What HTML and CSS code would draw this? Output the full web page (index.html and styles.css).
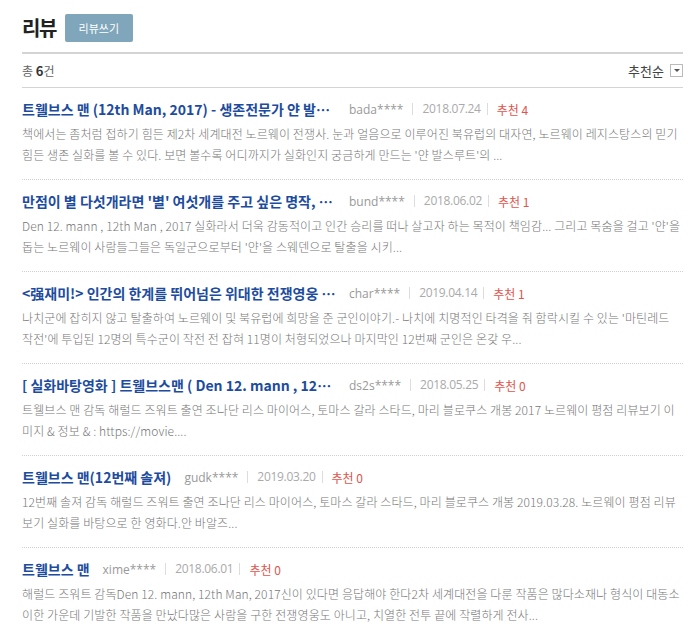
FILE: index.html
```html
<!DOCTYPE html>
<html>
<head>
    <meta charset="UTF-8">
    <title>리뷰</title>
    <link rel="stylesheet" href="styles.css">
</head>
<body>
    <div class="review-box">
        <div class="review-head">
            <h2>리뷰</h2>
            <a href="#" class="btn-write">리뷰쓰기</a>
        </div>

        <div class="review-bar">
            <span class="count">총 <b>6</b>건</span>
            <span class="sort">추천순 <i class="sort-arrow"></i></span>
        </div>

        <ul class="review-list">
            <li>
                <div class="item-top">
                    <a href="#" class="item-title">트웰브스 맨 (12th Man, 2017) - 생존전문가 얀 발스루드의 실화</a>
                    <span class="writer">bada****</span>
                    <span class="date">2018.07.24</span>
                    <span class="rec">추천 4</span>
                </div>
                <p class="item-desc">책에서는 좀처럼 접하기 힘든 제2차 세계대전 노르웨이 전쟁사. 눈과 얼음으로 이루어진 북유럽의 대자연, 노르웨이 레지스탕스의 믿기 힘든 생존 실화를 볼 수 있다. 보면 볼수록 어디까지가 실화인지 궁금하게 만드는 '얀 발스루트'의 ...</p>
            </li>
            <li>
                <div class="item-top">
                    <a href="#" class="item-title">만점이 별 다섯개라면 '별' 여섯개를 주고 싶은 명작, 트웰브스 맨</a>
                    <span class="writer">bund****</span>
                    <span class="date">2018.06.02</span>
                    <span class="rec">추천 1</span>
                </div>
                <p class="item-desc">Den 12. mann , 12th Man , 2017 실화라서 더욱 감동적이고 인간 승리를 떠나 살고자 하는 목적이 책임감... 그리고 목숨을 걸고 '얀'을 돕는 노르웨이 사람들그들은 독일군으로부터 '얀'을 스웨덴으로 탈출을 시키...</p>
            </li>
            <li>
                <div class="item-top">
                    <a href="#" class="item-title">&lt;强재미!&gt; 인간의 한계를 뛰어넘은 위대한 전쟁영웅 이야기</a>
                    <span class="writer">char****</span>
                    <span class="date">2019.04.14</span>
                    <span class="rec">추천 1</span>
                </div>
                <p class="item-desc">나치군에 잡히지 않고 탈출하여 노르웨이 및 북유럽에 희망을 준 군인이야기.- 나치에 치명적인 타격을 줘 함락시킬 수 있는 '마틴레드 작전'에 투입된 12명의 특수군이 작전 전 잡혀 11명이 처형되었으나 마지막인 12번째 군인은 온갖 우...</p>
            </li>
            <li>
                <div class="item-top">
                    <a href="#" class="item-title">[ 실화바탕영화 ] 트웰브스맨 ( Den 12. mann , 12th Man )</a>
                    <span class="writer">ds2s****</span>
                    <span class="date">2018.05.25</span>
                    <span class="rec">추천 0</span>
                </div>
                <p class="item-desc">트웰브스 맨 감독 해럴드 즈워트 출연 조나단 리스 마이어스, 토마스 갈라 스타드, 마리 블로쿠스 개봉 2017 노르웨이 평점 리뷰보기 이미지 &amp; 정보 &amp; : https://movie....</p>
            </li>
            <li>
                <div class="item-top">
                    <a href="#" class="item-title">트웰브스 맨(12번째 솔져)</a>
                    <span class="writer">gudk****</span>
                    <span class="date">2019.03.20</span>
                    <span class="rec">추천 0</span>
                </div>
                <p class="item-desc">12번째 솔져 감독 해럴드 즈워트 출연 조나단 리스 마이어스, 토마스 갈라 스타드, 마리 블로쿠스 개봉 2019.03.28. 노르웨이 평점 리뷰보기 실화를 바탕으로 한 영화다.안 바알즈...</p>
            </li>
            <li>
                <div class="item-top">
                    <a href="#" class="item-title">트웰브스 맨</a>
                    <span class="writer">xime****</span>
                    <span class="date">2018.06.01</span>
                    <span class="rec">추천 0</span>
                </div>
                <p class="item-desc">해럴드 즈워트 감독Den 12. mann, 12th Man, 2017신이 있다면 응답해야 한다2차 세계대전을 다룬 작품은 많다소재나 형식이 대동소이한 가운데 기발한 작품을 만났다많은 사람을 구한 전쟁영웅도 아니고, 치열한 전투 끝에 작렬하게 전사...</p>
            </li>
        </ul>
    </div>
</body>
</html>
```

FILE: styles.css
```css
body {
    margin: 0;
    background: #fff;
    font-family: "Noto Sans CJK KR", "Noto Sans", sans-serif;
    color: #333;
}
.review-box {
    width: 661px;
    margin-left: 22px;
}
.review-head {
    display: flex;
    align-items: center;
    gap: 9px;
    padding-top: 14px;
    padding-bottom: 10px;
    border-bottom: 2px solid #d4d4d4;
}
.review-head h2 {
    margin: 0;
    font-size: 20px;
    font-weight: bold;
    color: #222;
    letter-spacing: -1.5px;
    line-height: 28px;
}
.btn-write {
    display: block;
    width: 68px;
    height: 28px;
    line-height: 28px;
    text-align: center;
    background: #7fa6ba;
    border-radius: 2px;
    color: #fff;
    font-size: 11px;
    text-decoration: none;
}
.review-bar {
    display: flex;
    justify-content: space-between;
    align-items: center;
    height: 33px;
    border-bottom: 1px solid #d4d4d4;
    font-size: 12px;
    color: #666;
}
.count b {
    color: #333;
    font-size: 13px;
}
.sort {
    display: flex;
    align-items: center;
    gap: 6px;
    color: #444;
    font-size: 13px;
}
.sort-arrow {
    display: block;
    width: 11px;
    height: 11px;
    border: 1px solid #bbb;
    position: relative;
}
.sort-arrow::after {
    content: "";
    position: absolute;
    left: 3px;
    top: 4px;
    border-left: 3px solid transparent;
    border-right: 3px solid transparent;
    border-top: 3px solid #555;
}
.review-list {
    list-style: none;
    margin: 0;
    padding: 0;
}
.review-list li {
    padding: 11px 0 14px;
    border-bottom: 1px dotted #d0d0d0;
}
.review-list li:last-child {
    border-bottom: 1px solid #c8c8c8;
}
.item-top {
    display: flex;
    align-items: center;
    height: 20px;
    font-size: 12px;
}
.item-title {
    max-width: 314px;
    overflow: hidden;
    white-space: nowrap;
    text-overflow: ellipsis;
    color: #1d4c9e;
    font-size: 14px;
    font-weight: bold;
    text-decoration: none;
    margin-right: 13px;
}
.writer {
    color: #999;
    font-family: "Open Sans", sans-serif;
    font-size: 12px;
}
.date {
    color: #aaa;
    font-family: "Open Sans", sans-serif;
    font-size: 12px;
    letter-spacing: -0.3px;
    padding: 0 6px 0 9px;
    margin-left: 9px;
    border-left: 1px solid #ddd;
    border-right: 1px solid #ddd;
    line-height: 12px;
}
.rec {
    color: #e0544c;
    margin-left: 9px;
}
.item-desc {
    margin: 4px 0 0;
    font-size: 12px;
    line-height: 21px;
    color: #777;
    font-weight: 300;
    letter-spacing: 0.1px;
}
```
